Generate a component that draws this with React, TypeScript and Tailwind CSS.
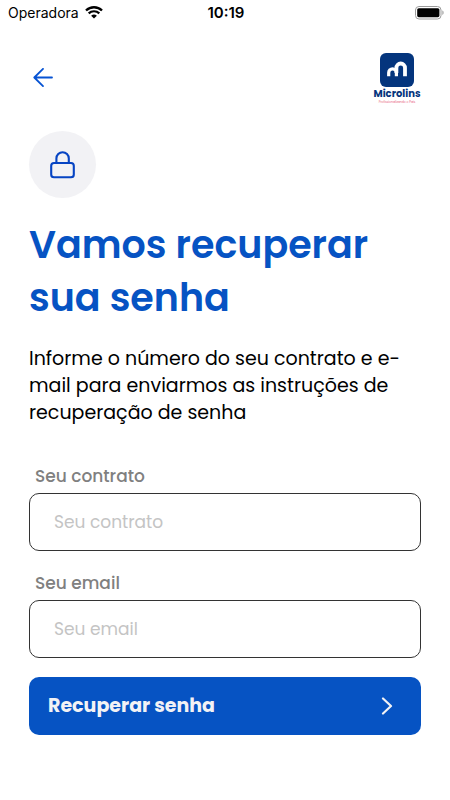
import type { SVGProps } from "react"

function WifiIcon(props: SVGProps<SVGSVGElement>) {
  return (
    <svg viewBox="0 0 18 13" fill="none" aria-hidden="true" {...props}>
      <path d="M1 4.5a11.5 11.5 0 0 1 16 0" stroke="currentColor" strokeWidth="2.4" />
      <path d="M3.7 7.4a7.6 7.6 0 0 1 10.6 0" stroke="currentColor" strokeWidth="2.2" />
      <path d="M9 12.6 6.1 9.8a4.2 4.2 0 0 1 5.8 0Z" fill="currentColor" />
    </svg>
  )
}

function BatteryIcon(props: SVGProps<SVGSVGElement>) {
  return (
    <svg viewBox="0 0 29 14" aria-hidden="true" {...props}>
      <rect x="0.5" y="0.5" width="25.5" height="12.5" rx="3.5" fill="none" stroke="#9b9b9b" />
      <rect x="2.2" y="2.2" width="22.2" height="9" rx="1.6" fill="#000" />
      <path d="M27.4 4.6v4.4c1.6-.6 1.6-3.8 0-4.4Z" fill="#9b9b9b" />
    </svg>
  )
}

function ArrowLeftIcon(props: SVGProps<SVGSVGElement>) {
  return (
    <svg viewBox="0 0 20 20" fill="none" stroke="currentColor" strokeWidth="1.8" strokeLinecap="round" strokeLinejoin="round" aria-hidden="true" {...props}>
      <path d="M19 9.5H1.5M10 .9 1.3 9.5 10 18.1" />
    </svg>
  )
}

function LockIcon(props: SVGProps<SVGSVGElement>) {
  return (
    <svg viewBox="0 0 26 28" fill="none" stroke="currentColor" strokeWidth="2.1" strokeLinecap="round" aria-hidden="true" {...props}>
      <rect x="1.2" y="12" width="22.6" height="14.2" rx="2.8" />
      <path d="M6.4 12V7.4a6.1 6.1 0 0 1 12.4 0V12" />
    </svg>
  )
}

function Logo() {
  return (
    <div className="flex w-12 flex-col items-center">
      <svg viewBox="0 0 34 34" className="size-[34px]" aria-hidden="true">
        <rect width="34" height="34" rx="6" fill="#04357d" />
        <g fill="none" stroke="#fff">
          <path d="M8.7 23.3v-3.6a3.8 3.8 0 0 1 7.7 0v3.6" strokeWidth="3.2" />
          <path d="M16.4 20v-5.2a4.3 4.3 0 0 1 8.6 0v8.5" strokeWidth="3.8" />
        </g>
      </svg>
      <span className="mt-px text-[10px] leading-3 font-bold whitespace-nowrap text-[#04357d]">Microlins</span>
      <span className="mt-px text-[3px] leading-[2px] whitespace-nowrap text-[#e8607a]">Profissionalizando o País</span>
    </div>
  )
}

interface FieldProps {
  id: string
  label: string
  type: string
}

function Field({ id, label, type }: FieldProps) {
  return (
    <div className="flex flex-col">
      <label htmlFor={id} className="ml-1.5 pt-0.5 text-[17px] leading-[34px] font-medium text-[#808080]">
        {label}
      </label>
      <input
        id={id}
        type={type}
        placeholder={label}
        className="h-[58px] w-full rounded-[10px] border border-[#333] bg-white px-6 text-[17px] text-black outline-none placeholder:text-[#c4c4c4] focus:border-[#0653c3]"
      />
    </div>
  )
}

export default function App() {
  return (
    <div className="min-h-screen bg-white font-['Poppins','Inter',sans-serif] text-black">
      {/* Status bar */}
      <div className="grid h-[25px] grid-cols-3 items-center pr-1.5 pl-2 font-['Inter',sans-serif] text-sm leading-none">
        <div className="flex items-center gap-1.5">
          <span>Operadora</span>
          <WifiIcon className="h-[13px] w-[18px]" />
        </div>
        <span className="text-center text-[15px] font-semibold">10:19</span>
        <BatteryIcon className="h-3.5 w-[29px] justify-self-end" />
      </div>

      <main className="px-[29px] pt-7 pb-16">
        <header className="flex items-center justify-between">
          <button type="button" aria-label="Voltar" className="p-1 text-[#0653d3]">
            <ArrowLeftIcon className="size-5" />
          </button>
          <Logo />
        </header>

        <div className="mt-7 flex size-[67px] items-center justify-center rounded-full bg-[#f2f2f5] text-[#0644c3]">
          <LockIcon className="h-7 w-[26px]" />
        </div>

        <h1 className="mt-5 text-[38px] leading-[53px] font-semibold text-[#0653c3]">Vamos recuperar sua senha</h1>

        <p className="mt-[21px] text-[19px] leading-[27px]">
          Informe o número do seu contrato e e-mail para enviarmos as instruções de recuperação de senha
        </p>

        <form className="mt-[31px] flex flex-col" onSubmit={(e) => e.preventDefault()}>
          <div className="flex flex-col gap-[13px]">
            <Field id="contrato" label="Seu contrato" type="text" />
            <Field id="email" label="Seu email" type="email" />
          </div>
          <button
            type="submit"
            className="mt-[19px] flex h-[58px] items-center justify-between rounded-[10px] bg-[#0653c3] pr-7 pl-[19px] text-[19px] font-bold text-[#f2f2f5]"
          >
            Recuperar senha
            <svg viewBox="0 0 12 18" className="h-[18px] w-3" fill="none" stroke="currentColor" strokeWidth="2.2" strokeLinecap="round" strokeLinejoin="round" aria-hidden="true">
              <path d="m2 1.5 8 7.5-8 7.5" />
            </svg>
          </button>
        </form>
      </main>
    </div>
  )
}
